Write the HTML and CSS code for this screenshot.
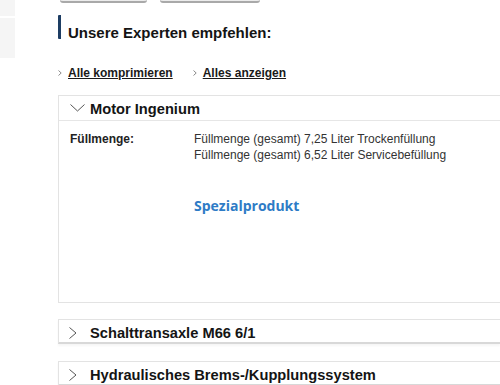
FILE: index.html
```html
<html>
  <head>
    <title>Unsere Experten empfehlen</title>
    <meta name="viewport" content="width=device-width, initial-scale=1">
    <link rel="stylesheet" href="styles.css">
  </head>
  <body>
    <div class="page">
      <div class="side">
        <div class="side-item"></div>
        <div class="side-item long"></div>
      </div>
      <div class="main">
        <div class="tabs">
          <span class="tab"></span>
          <span class="tab wide"></span>
        </div>
        <h2 class="heading">Unsere Experten empfehlen:</h2>
        <div class="links">
          <a href="#" class="link"><svg width="4" height="6" viewBox="0 0 4 6"><polyline points="0.5,0.5 3.2,3 0.5,5.5" fill="none" stroke="#8a8a8a" stroke-width="1"/></svg>Alle komprimieren</a>
          <a href="#" class="link"><svg width="4" height="6" viewBox="0 0 4 6"><polyline points="0.5,0.5 3.2,3 0.5,5.5" fill="none" stroke="#8a8a8a" stroke-width="1"/></svg>Alles anzeigen</a>
        </div>

        <div class="panel open">
          <div class="panel-head">
            <svg class="chev-down" width="15" height="8" viewBox="0 0 15 8"><polyline points="0.5,0.5 7.5,7 14.5,0.5" fill="none" stroke="#555" stroke-width="1"/></svg>
            <span>Motor Ingenium</span>
          </div>
          <div class="panel-body">
            <div class="label">Füllmenge:</div>
            <div class="value">Füllmenge (gesamt) 7,25 Liter Trockenfüllung<br>Füllmenge (gesamt) 6,52 Liter Servicebefüllung</div>
            <div class="special">Spezialprodukt</div>
          </div>
        </div>

        <div class="panel closed">
          <div class="panel-head">
            <svg class="chev-right" width="15" height="12" viewBox="0 0 15 12"><polyline points="0.5,0.5 7,6 0.5,11.5" fill="none" stroke="#555" stroke-width="1"/></svg>
            <span>Schalttransaxle M66 6/1</span>
          </div>
        </div>

        <div class="panel closed last">
          <div class="panel-head">
            <svg class="chev-right" width="15" height="12" viewBox="0 0 15 12"><polyline points="0.5,0.5 7,6 0.5,11.5" fill="none" stroke="#555" stroke-width="1"/></svg>
            <span>Hydraulisches Brems-/Kupplungssystem</span>
          </div>
        </div>
      </div>
    </div>
  </body>
</html>
```

FILE: styles.css
```css
body { margin: 0; background: #fff; font-family: "Liberation Sans", Arial, sans-serif; color: #1a1a1a; overflow: hidden; }
.page { display: flex; width: 500px; }

/* left navigation stub */
.side { width: 15px; flex-shrink: 0; margin-right: 43px; }
.side-item { height: 16px; background: #f5f5f5; margin-bottom: 2px; }
.side-item.long { height: 40px; }

.main { flex: 1; min-width: 0; }

/* buttons cut off by the top edge */
.tabs { display: flex; gap: 13px; padding-left: 2px; height: 3px; }
.tab {
  width: 87px;
  height: 3px;
  box-sizing: border-box;
  background: #ececec;
  border-bottom: 2px solid #a9a9a9;
  border-radius: 0 0 4px 4px;
}
.tab.wide { width: 100px; }

.heading {
  margin: 12px 0 0 0;
  height: 24px;
  box-sizing: border-box;
  border-left: 3px solid #1d3d63;
  border-radius: 1px;
  padding: 9px 0 0 7px;
  font-size: 15px;
  line-height: 17px;
  font-weight: bold;
  color: #141414;
}

.links { display: flex; gap: 20px; margin-top: 27px; font-size: 12px; line-height: 14px; }
.link { display: inline-flex; align-items: center; color: #1a1a1a; font-weight: bold; text-decoration: underline; }
.link svg { margin-right: 6px; margin-top: -1px; }

.panel { border: 1px solid #e3e3e3; border-right: none; margin-top: 16px; }
.panel.open { margin-top: 15px; }
.panel.last { margin-top: 17px; }
.panel-head {
  display: flex;
  align-items: center;
  padding: 4px 0 2px 11px;
  font-size: 14.67px;
  line-height: 18px;
  font-weight: bold;
  color: #141414;
  white-space: nowrap;
}
.open .panel-head { border-bottom: 1px solid #e6e6e6; }
.closed { border-bottom: 2px solid #d8d8d8; box-shadow: 0 2px 2px rgba(0, 0, 0, 0.04); }
.closed .panel-head { padding: 4px 0 0 10px; }
.chev-down { margin-right: 5px; margin-top: -2px; }
.chev-right { margin-right: 6px; }

.panel-body {
  display: grid;
  grid-template-columns: 124px 1fr;
  padding: 10px 0 86px 11px;
  font-size: 12px;
  line-height: 16px;
}
.label { font-weight: bold; color: #222; }
.value { color: #333; white-space: nowrap; }
.special {
  grid-column: 2;
  margin-top: 33px;
  font-family: "Open Sans", sans-serif;
  font-weight: bold;
  font-size: 14px;
  line-height: 20px;
  color: #2e7bc6;
}
```
